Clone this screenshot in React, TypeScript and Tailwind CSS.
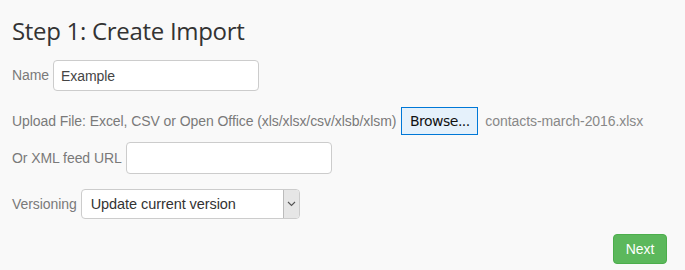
import React from "react";

export default function App() {
  return (
    <div className="w-[685px] h-[270px] bg-[#f9f9f9] pl-[12px] pr-[18px] font-['Liberation_Sans',Arial,sans-serif] text-[14px] tracking-[-0.07px] text-[#7a7a7a] overflow-hidden">
      <h1 className="pt-[14px] h-[56px] text-[24px] leading-[34px] text-[#333] font-['Open_Sans',sans-serif] font-normal tracking-[-0.3px]">
        Step 1: Create Import
      </h1>

      {/* Name */}
      <div className="flex items-center h-[31px] mt-[4px]">
        <span className="mr-[4px]">Name</span>
        <input
          defaultValue="Example"
          className="w-[206px] h-[31px] px-[7px] bg-white border border-[#ccc] rounded-[4px] text-[#444] text-[14px] outline-none"
        />
      </div>

      {/* Upload */}
      <div className="flex items-center h-[28px] mt-[16px]">
        <span className="mr-[5px]">Upload File: Excel, CSV or Open Office (xls/xlsx/csv/xlsb/xlsm)</span>
        <button className="h-[28px] w-[77px] border border-[#0078d7] bg-[#e5f1fb] text-[#111] text-[14px] font-['DejaVu_Sans',sans-serif] tracking-[-0.5px]">
          Browse...
        </button>
        <span className="ml-[7px] text-[#888]">contacts-march-2016.xlsx</span>
      </div>

      {/* XML */}
      <div className="flex items-center h-[32px] mt-[7px]">
        <span className="mr-[4px]">Or XML feed URL</span>
        <input className="w-[206px] h-[32px] px-[7px] bg-white border border-[#ccc] rounded-[4px] outline-none" />
      </div>

      {/* Versioning */}
      <div className="flex items-center h-[30px] mt-[15px]">
        <span className="mr-[4px]">Versioning</span>
        <div className="flex w-[219px] h-[30px] bg-white border border-[#ccc] rounded-[4px] overflow-hidden">
          <span className="flex-1 pl-[9px] leading-[28px] text-[#333] text-[14.5px]">Update current version</span>
          <span className="w-[16px] h-full bg-[#e6e6e6] border-l border-[#bbb] flex items-center justify-center">
            <svg width="9" height="6" viewBox="0 0 9 6">
              <path d="M1 1 L4.5 4.5 L8 1" fill="none" stroke="#555" strokeWidth="1.1" />
            </svg>
          </span>
        </div>
      </div>

      <div className="flex justify-end mt-[15px]">
        <button className="h-[30px] w-[54px] bg-[#5cb85c] border border-[#4cae4c] rounded-[4px] text-white text-[14px]">
          Next
        </button>
      </div>
    </div>
  );
}
